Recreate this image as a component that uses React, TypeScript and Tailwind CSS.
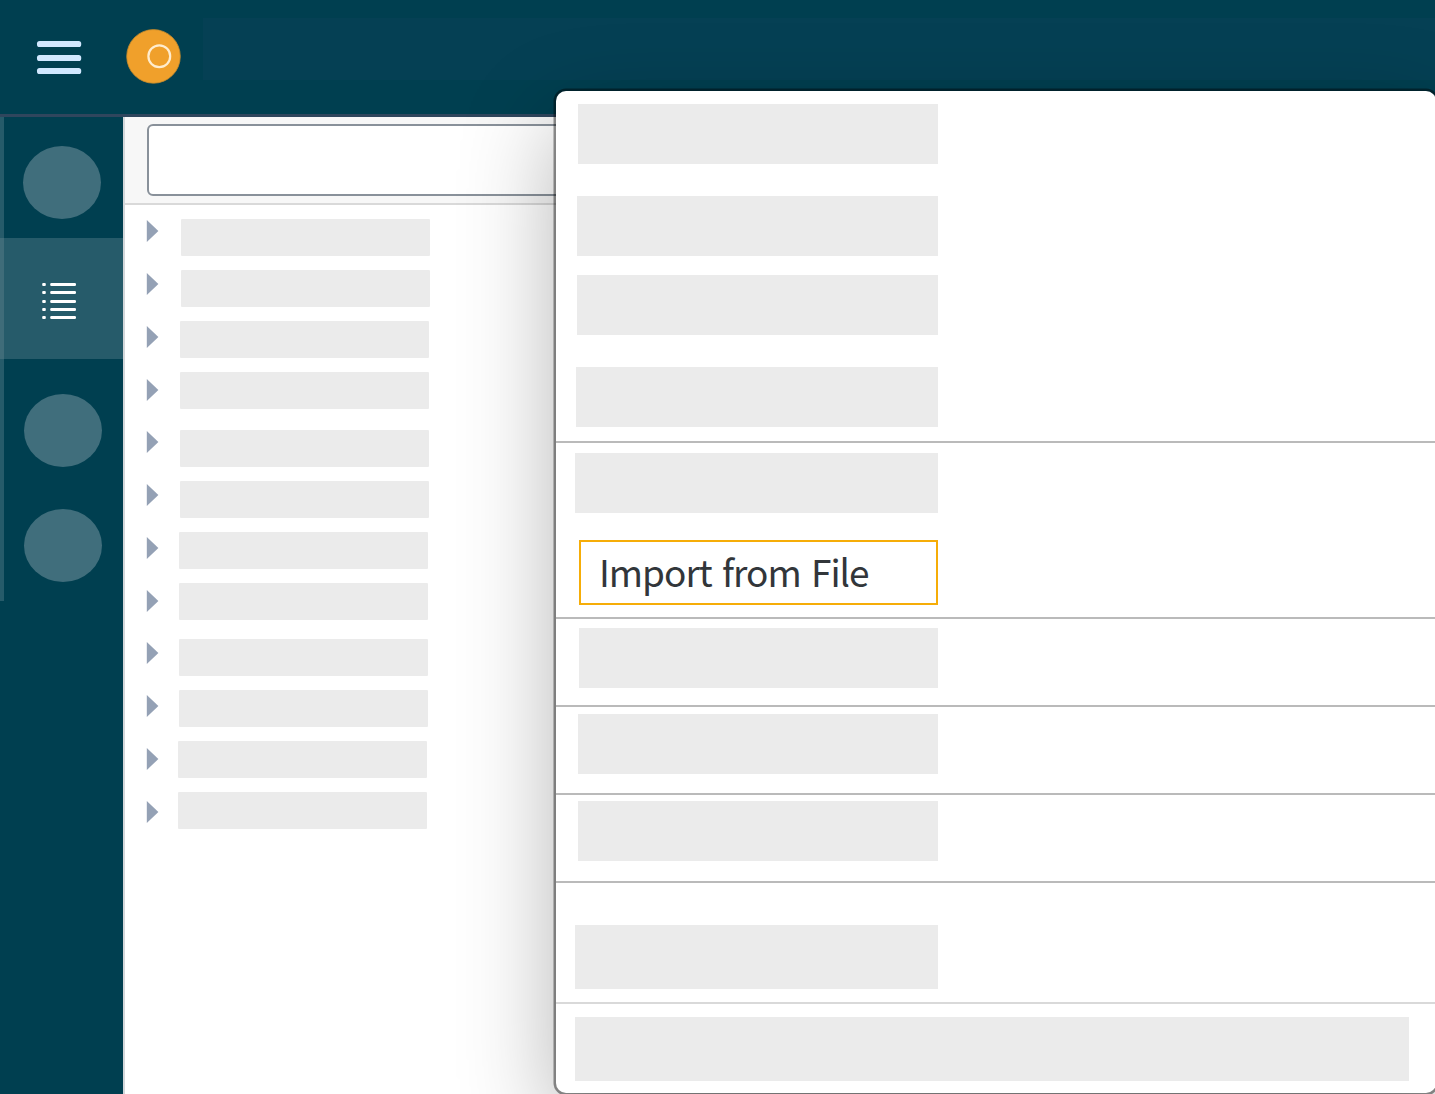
const treeRows = [
  'mt-[14px] ml-[3px]',
  'mt-[14px] ml-[3px]',
  'mt-[14px] ml-[2px]',
  'mt-[14px] ml-[2px]',
  'mt-[21px] ml-[2px]',
  'mt-[14px] ml-[2px]',
  'mt-[14px] ml-[1px]',
  'mt-[14px] ml-[1px]',
  'mt-[19px] ml-[1px]',
  'mt-[14px] ml-[1px]',
  'mt-[14px]',
  'mt-[14px]',
];

function Block({ className }: { className: string }) {
  return <div className={`shrink-0 bg-[#ebebeb] ${className}`} />;
}

function Divider({ className }: { className: string }) {
  return <div className={`h-[2px] shrink-0 ${className}`} />;
}

function Header() {
  return (
    <header className="flex h-[117px] shrink-0 border-b-[3px] border-[#2f465d] bg-[#003f50]">
      <svg className="mt-[40px] ml-[36px] shrink-0" width="46" height="35" viewBox="0 0 46 35" fill="#d1e8ff">
        <rect x="1" y="1" width="44.2" height="6" rx="2.6" />
        <rect x="1" y="15" width="44.2" height="6" rx="2.6" />
        <rect x="1" y="28" width="44.2" height="6" rx="2.6" />
      </svg>
      <svg className="mt-[29px] ml-[44px] shrink-0" width="55" height="55" viewBox="0 0 55 55">
        <circle cx="27.5" cy="27.4" r="26.8" fill="#f0a02b" stroke="#c58a2c" strokeWidth="0.8" />
        <circle cx="33.3" cy="27.2" r="10.9" fill="none" stroke="#ffeccd" strokeWidth="2.2" />
      </svg>
      <div className="mt-[18px] ml-[22px] h-[62px] flex-1 bg-[#054054]" />
    </header>
  );
}

function SideRail() {
  return (
    <nav className="flex w-[125px] shrink-0 border-r-2 border-[#d3d7da] bg-[#003f50]">
      <div className="flex h-[484px] w-[4px] flex-col bg-[#265b6a]">
        <div className="mt-[121px] h-[121px] bg-[#3f6c79]" />
      </div>
      <div className="flex flex-1 flex-col">
        <div className="mt-[29px] ml-[19px] h-[73px] w-[78px] rounded-[50%] bg-[#406e7c]" />
        <div className="mt-[19px] flex h-[121px] bg-[#265b6a]">
          <svg className="mt-[44px] ml-[37px]" width="36" height="38" viewBox="0 0 36 38" fill="#fff">
            {[1, 9, 18, 26, 34].map((y) => (
              <g key={y}>
                <rect x="1.2" y={y} width="3.6" height="3" rx="1" />
                <rect x="9.2" y={y} width="25.8" height="3" rx="1.2" />
              </g>
            ))}
          </svg>
        </div>
        <div className="mt-[35px] ml-[20px] h-[73px] w-[78px] rounded-[50%] bg-[#406e7c]" />
        <div className="mt-[42px] ml-[20px] h-[73px] w-[78px] rounded-[50%] bg-[#406e7c]" />
      </div>
    </nav>
  );
}

function Explorer() {
  return (
    <section className="flex flex-1 flex-col bg-white">
      <div className="h-[88px] shrink-0 border-b-2 border-[#d9d9d9] bg-[#f7f7f7] pt-[7px] pl-[22px]">
        <div className="h-[72px] rounded-[6px] border-2 border-[#89919a] bg-white" />
      </div>
      <div className="flex">
        <div className="ml-[21px] flex w-[32px] flex-col">
          {treeRows.map((_, i) => (
            <div key={i} className="flex h-[52.76px] items-center">
              <svg width="14" height="24" viewBox="0 0 14 24">
                <path d="M.8 1L12.4 12L.8 23Z" fill="#94a1b5" />
              </svg>
            </div>
          ))}
        </div>
        <div className="flex flex-col">
          {treeRows.map((spacing, i) => (
            <Block key={i} className={`h-[37px] w-[249px] rounded-[1px] ${spacing}`} />
          ))}
        </div>
      </div>
    </section>
  );
}

function Menu() {
  return (
    <div className="absolute top-[91px] left-[556px] flex h-[1002px] w-[880px] flex-col rounded-[10px] bg-white shadow-[0_0_0_2.5px_rgba(0,0,0,0.42),0_32px_96px_rgba(0,0,0,0.3)]">
      <Block className="mt-[13px] ml-[22px] h-[60px] w-[360px]" />
      <Block className="mt-[32px] ml-[21px] h-[60px] w-[361px]" />
      <Block className="mt-[19px] ml-[21px] h-[60px] w-[361px]" />
      <Block className="mt-[32px] ml-[20px] h-[60px] w-[362px]" />
      <Divider className="mt-[14px] bg-[#bababa]" />
      <Block className="mt-[10px] ml-[19px] h-[60px] w-[363px]" />
      <button className="mt-[27px] ml-[23px] flex h-[65px] w-[359px] shrink-0 items-center border-2 border-[#f6ad08] pb-[3px] pl-[18px] font-['Noto_Sans_CJK_SC','Noto_Sans',sans-serif] text-[37px] leading-none tracking-[-1px] [word-spacing:3px] whitespace-nowrap text-[#32363a]">
        Import from File
      </button>
      <Divider className="mt-[12px] bg-[#bababa]" />
      <Block className="mt-[9px] ml-[23px] h-[60px] w-[359px]" />
      <Divider className="mt-[17px] bg-[#bababa]" />
      <Block className="mt-[7px] ml-[22px] h-[60px] w-[360px]" />
      <Divider className="mt-[19px] bg-[#bababa]" />
      <Block className="mt-[6px] ml-[22px] h-[60px] w-[360px]" />
      <Divider className="mt-[20px] bg-[#bababa]" />
      <Block className="mt-[42px] ml-[19px] h-[64px] w-[363px]" />
      <Divider className="mt-[13px] bg-[#d9d9d9]" />
      <Block className="mt-[13px] ml-[19px] h-[64px] w-[834px]" />
    </div>
  );
}

export default function App() {
  return (
    <div className="relative flex h-[1094px] w-[1435px] flex-col overflow-hidden bg-white">
      <Header />
      <div className="flex flex-1">
        <SideRail />
        <Explorer />
      </div>
      <Menu />
    </div>
  );
}
